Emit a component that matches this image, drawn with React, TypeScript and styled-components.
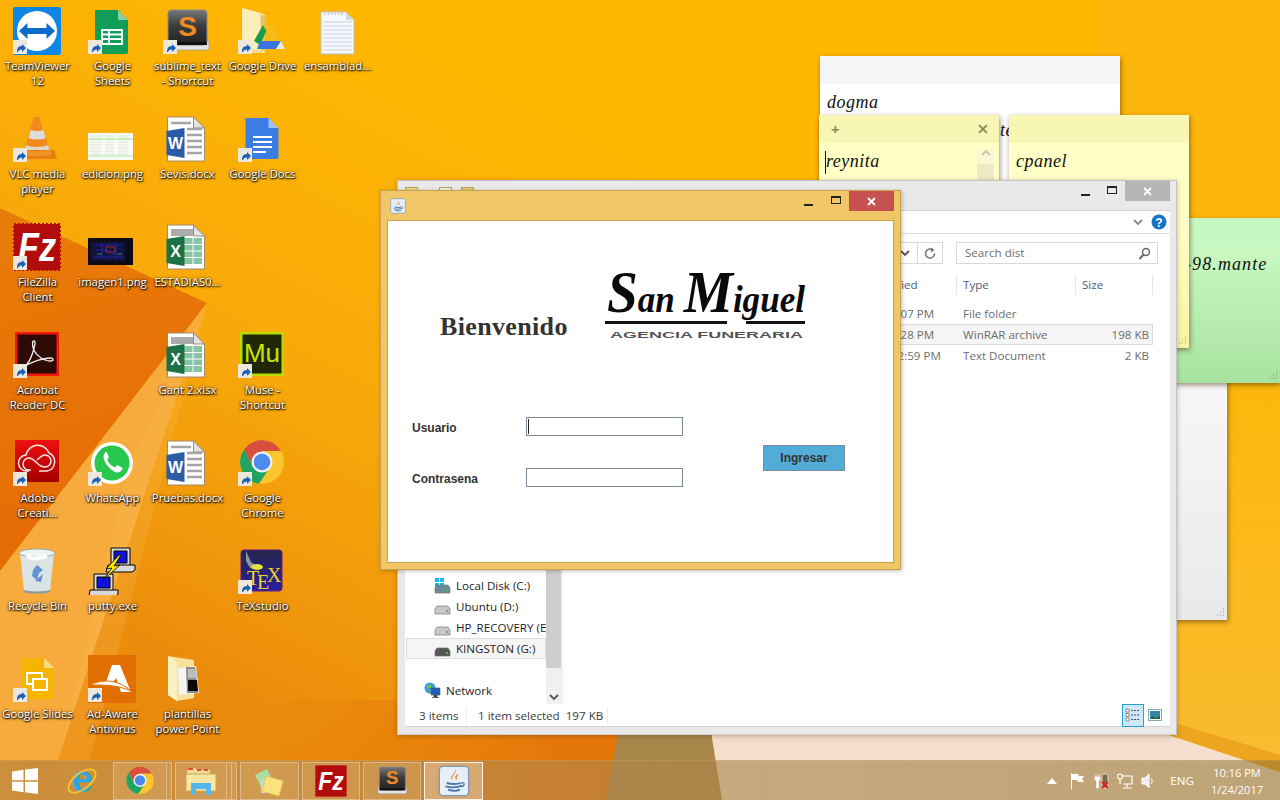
import React from 'react';
import styled, { createGlobalStyle } from 'styled-components';

const Global = createGlobalStyle`
  html, body { margin: 0; padding: 0; width: 1280px; height: 800px; overflow: hidden; }
  body { font-family: "Open Sans", "Noto Sans", sans-serif; }
  * { box-sizing: border-box; }
`;

const UI = '"Open Sans", "Noto Sans", sans-serif';
const HAND = '"Liberation Serif", serif';

const Desktop = styled.div`
  position: relative; width: 1280px; height: 800px; overflow: hidden; background: #fdb400;
`;
const WallpaperSvg = styled.svg`
  position: absolute; inset: 0; width: 1280px; height: 800px;
`;
const IconGrid = styled.div`
  position: absolute; inset: 0 auto auto 0;
  display: grid; grid-template-columns: repeat(5, 75px); grid-auto-rows: 108px;
`;
const Cell = styled.div<{ $c: number; $r: number }>`
  grid-column: ${p => p.$c + 1}; grid-row: ${p => p.$r + 1};
  display: flex; flex-direction: column; align-items: center; padding-top: 7px;
`;
const IconBox = styled.div`
  position: relative; width: 48px; height: 48px; flex: none; margin-right: 1px;
  svg { display: block; }
`;
const Badge = styled.svg`
  position: absolute; left: 0; bottom: 1px; width: 14px; height: 14px;
`;
const Label = styled.div`
  margin-top: 3px; width: 74px; text-align: center; white-space: pre; color: #fff;
  font: 400 11.3px/15px ${UI};
  text-shadow: 0 1px 2px rgba(0,0,0,.95), 0 0 3px rgba(0,0,0,.7), 1px 1px 1px rgba(0,0,0,.6);
`;

const Note = styled.div<{ $x: number; $y: number; $w: number; $h: number; $body: string }>`
  position: absolute; left: ${p => p.$x}px; top: ${p => p.$y}px; width: ${p => p.$w}px; height: ${p => p.$h}px;
  background: ${p => p.$body}; box-shadow: 1px 2px 5px rgba(60,30,0,.5);
  display: flex; flex-direction: column; overflow: hidden;
`;
const NoteHead = styled.div<{ $c: string }>`
  height: 28px; flex: none; background: ${p => p.$c}; display: flex; align-items: center;
  justify-content: space-between; padding: 0 11px 0 12px; color: #8b8a5c; font: 700 15px/1 ${UI};
`;
const NoteBody = styled.div<{ $pl?: number }>`
  flex: 1; display: flex; min-height: 0; padding: 4px 0 0 ${p => p.$pl ?? 7}px; position: relative;
`;
const NoteText = styled.div<{ $ls?: number }>`
  flex: 1; font: italic 400 18px/28px ${HAND}; letter-spacing: ${p => p.$ls ?? 0.5}px; color: #111; white-space: pre;
`;
const NoteIndent = styled.div<{ $w: number }>`
  padding-left: ${p => p.$w}px;
`;
const Caret = styled.i`
  position: absolute; left: 6px; top: 8px; width: 1px; height: 23px; background: #111;
`;
const Grip = styled.svg`
  position: absolute; right: 2px; bottom: 2px; width: 10px; height: 10px;
`;
const NoteScroll = styled.div`
  position: absolute; right: 5px; top: 6px; width: 17px; height: 120px; background: #f8f7d3;
  display: flex; flex-direction: column; align-items: center;
`;
const NoteThumb = styled.div`
  margin-top: 8px; width: 17px; flex: 1; background: #edebc6;
`;

const Explorer = styled.div`
  position: absolute; left: 397px; top: 180px; width: 780px; height: 555px;
  background: #e9e9e9; border: 1px solid #c4c4c4; border-bottom-color: #d0d0d0;
  box-shadow: 0 1px 5px rgba(60,30,0,.3);
  display: flex; flex-direction: column; padding: 0 6px 7px 7px;
`;
const ExTitle = styled.div`
  height: 29px; flex: none; display: flex; align-items: flex-start; position: relative;
`;
const QuickIcons = styled.div`
  display: flex; gap: 9px; align-items: center; padding-top: 6px;
  svg:first-child { margin-right: 12px; }
`;
const WinButtons = styled.div`
  margin-left: auto; display: flex; align-items: flex-start;
`;
const WinBtn = styled.div<{ $w: number; $bg?: string }>`
  width: ${p => p.$w}px; height: 20px; background: ${p => p.$bg || 'transparent'};
  display: flex; align-items: center; justify-content: center;
`;
const MinGlyph = styled.i`
  display: block; width: 9px; height: 2px; background: #222; margin-top: 8px;
`;
const MaxGlyph = styled.i`
  display: block; width: 10px; height: 8px; border: 1px solid #222; border-top-width: 2px; margin-top: -2px;
`;
const ExInner = styled.div`
  flex: 1; background: #fff; display: flex; flex-direction: column; min-height: 0;
  border: 1px solid #d4d4d4; border-width: 1px 0 1px 0;
`;
const Ribbon = styled.div`
  height: 23px; flex: none; border-bottom: 1px solid #dcdcdc; display: flex; align-items: center;
  justify-content: flex-end; padding-right: 3px; gap: 8px;
`;
const AddressRow = styled.div`
  height: 30px; flex: none; display: flex; align-items: flex-end; padding: 0 12px 0 45px; gap: 13px;
`;
const AddressBox = styled.div`
  flex: 1; height: 22px; border: 1px solid #d9d9d9; display: flex; justify-content: flex-end; align-items: center;
`;
const AddrPart = styled.div`
  width: 25px; height: 20px; display: flex; align-items: center; justify-content: center;
  & + & { border-left: 1px solid #d9d9d9; }
`;
const SearchBox = styled.div`
  width: 202px; height: 22px; border: 1px solid #d9d9d9; display: flex; align-items: center;
  justify-content: space-between; padding: 0 6px 0 8px; color: #6d6d6d; font: 400 11.6px/1 ${UI};
`;
const ExBody = styled.div`
  flex: 1; display: flex; min-height: 0;
`;
const NavPane = styled.div`
  width: 158px; flex: none; position: relative; display: flex; flex-direction: column;
  justify-content: flex-end; border-right: 2px solid #f1f1f1; padding-bottom: 3px;
`;
const NavItem = styled.div<{ $sel?: boolean }>`
  height: 21px; width: 140px; display: flex; align-items: center; gap: 5px; padding-left: 28px;
  margin-left: 1px; color: #1d1d1d; font: 400 11.6px/1 ${UI}; white-space: nowrap; overflow: hidden;
  background: ${p => (p.$sel ? '#f5f5f5' : 'transparent')};
  outline: ${p => (p.$sel ? '1px solid #dcdcdc' : 'none')}; outline-offset: -1px;
  svg { flex: none; }
`;
const NavNet = styled(NavItem)`
  margin-top: 21px; padding-left: 18px;
`;
const NavScroll = styled.div`
  position: absolute; right: 0; top: 0; bottom: 0; width: 15px; background: #f0f0f0;
  display: flex; flex-direction: column; align-items: center; justify-content: flex-end; padding-bottom: 3px;
`;
const NavThumb = styled.div`
  position: absolute; left: 0; right: 0; top: 0; bottom: 36px; background: #cdcdcd;
`;
const List = styled.div`
  flex: 1; display: flex; flex-direction: column; padding-top: 10px; min-width: 0;
`;
const GridRow = styled.div<{ $sel?: boolean; $head?: boolean }>`
  display: grid; grid-template-columns: 272px 122px 119px 77px; align-items: center;
  height: 21px; width: 590px; color: ${p => (p.$head ? '#4c607a' : '#6d6d6d')}; font: 400 11.6px/1 ${UI};
  background: ${p => (p.$sel ? '#f5f5f5' : 'transparent')};
  outline: ${p => (p.$sel ? '1px solid #dadada' : 'none')}; outline-offset: -1px;
`;
const HeadCell = styled.div`
  height: 20px; display: flex; align-items: center; padding-left: 6px; border-right: 1px solid #dbe7f3;
  white-space: nowrap; overflow: hidden;
`;
const ListRows = styled.div`
  margin-top: 8px; display: flex; flex-direction: column;
`;
const TextCell = styled.div<{ $r?: boolean }>`
  padding: ${p => (p.$r ? '0 4px 0 0' : '0 0 0 6px')}; text-align: ${p => (p.$r ? 'right' : 'left')}; white-space: nowrap;
`;
const DateCell = styled.div`
  margin-left: -2px; white-space: nowrap;
`;
const Status = styled.div`
  height: 22px; flex: none; display: flex; align-items: center; color: #3c3c3c; font: 400 11.6px/1 ${UI};
  padding: 2px 0 0 14px; position: relative; white-space: pre;
`;
const StatusPart = styled.div<{ $w: number }>`
  width: ${p => p.$w}px; height: 16px; display: flex; align-items: center; border-right: 1px solid #ececec;
  & + & { padding-left: 11px; }
`;
const ViewButtons = styled.div`
  margin-left: auto; display: flex; align-items: center; gap: 4px; padding-right: 8px; margin-top: -2px;
`;
const ViewBtn = styled.div<{ $on?: boolean }>`
  width: ${p => (p.$on ? 22 : 14)}px; height: 23px; display: flex; align-items: center; justify-content: center;
  background: ${p => (p.$on ? '#cde8f8' : 'transparent')}; border: ${p => (p.$on ? '1px solid #26a0da' : 'none')};
`;

const Dialog = styled.div`
  position: absolute; left: 380px; top: 190px; width: 521px; height: 380px; background: #f0c667;
  border: 1px solid #c8a24d; box-shadow: 1px 1px 4px rgba(60,30,0,.3);
  display: flex; flex-direction: column; padding: 0 6px 6px 6px;
`;
const DlgTitle = styled.div`
  height: 29px; flex: none; display: flex; align-items: flex-start; padding-left: 3px;
`;
const DlgJava = styled.div`
  margin-top: 6px;
`;
const Client = styled.div`
  flex: 1; background: #fff; border: 1px solid #c8a24d; padding: 50px 0 0 0;
`;
const HeaderRow = styled.div`
  display: flex; align-items: flex-start; padding-left: 52px;
`;
const Welcome = styled.div`
  width: 165px; margin-top: 42px; font: 700 26px/28px "Liberation Serif", serif; letter-spacing: .35px; color: #333;
`;
const LogoSvg = styled.svg`
  display: block; width: 202px; height: 70px; flex: none;
`;
const Form = styled.div`
  margin-top: 76px; padding-left: 24px;
  display: grid; grid-template-columns: 114px 157px 82px; grid-template-rows: 19px 19px; row-gap: 32px; column-gap: 0;
`;
const FieldLabel = styled.div`
  font: 700 12px/23px "Liberation Sans", Arial, sans-serif; color: #333;
`;
const Field = styled.div`
  position: relative; border: 1px solid #7a8a99; background: #fff;
`;
const FieldCaret = styled.i`
  position: absolute; left: 1px; top: 1px; bottom: 1px; width: 1px; background: #222;
`;
const Submit = styled.div`
  grid-column: 3; grid-row: 1 / span 2; margin: 28px 0 0 80px; width: 82px; height: 26px;
  background: #51add8; border: 1px solid #7a8a99; display: flex; align-items: center; justify-content: center;
  font: 700 12px/1 "Liberation Sans", Arial, sans-serif; color: #333;
`;

const Taskbar = styled.div`
  position: absolute; left: 0; right: 0; bottom: 0; height: 40px; display: flex; align-items: stretch;
  background: linear-gradient(90deg, rgba(186,146,88,.62), rgba(176,134,76,.6) 45%, rgba(145,115,50,.55));
  border-top: 1px solid rgba(255,255,255,.08); padding-top: 1px; padding-right: 17px;
`;
const Start = styled.div`
  width: 50px; flex: none; display: flex; align-items: center; justify-content: center;
`;
const Pinned = styled.div`
  width: 63px; flex: none; display: flex; align-items: center; justify-content: center;
`;
const TaskBtn = styled.div<{ $w?: number; $on?: boolean; $ml?: number }>`
  width: ${p => p.$w ?? 59}px; flex: none; margin-left: ${p => p.$ml ?? 3}px; display: flex; align-items: center; justify-content: center;
  border: 1px solid ${p => (p.$on ? 'rgba(255,255,255,.85)' : 'rgba(255,255,255,.32)')};
  background: ${p => (p.$on ? 'rgba(255,255,255,.3)' : 'rgba(255,255,255,.12)')};
`;
const Sliver = styled.div`
  width: 5px; flex: none; border: 1px solid rgba(255,255,255,.32); border-left: 0; background: rgba(255,255,255,.12);
`;
const Tray = styled.div`
  margin-left: auto; display: flex; align-items: center; color: #fff;
`;
const TrayIcons = styled.div`
  display: flex; align-items: center; gap: 8px; margin-right: 15px;
`;
const FlagOffset = styled.span`
  display: block; margin-left: 4px; line-height: 0;
`;
const Eng = styled.div`
  font: 400 11.6px/1 ${UI}; margin-right: 17px;
`;
const Clock = styled.div`
  display: flex; flex-direction: column; align-items: center; font: 400 11px/17px ${UI};
`;

/* ---------- icons ---------- */
const Cut = () => (
  <Badge viewBox="0 0 14 14">
    <rect width="14" height="14" fill="#eee8dc" />
    <path d="M4 12c0-4 1.500-6 5-6V4l4 4-4 4V9.500C6.500 9.500 5.500 10.500 5 12z" fill="#1a63b8" />
  </Badge>
);
const S48 = (p: React.SVGProps<SVGSVGElement> & { s?: number }) => {
  const { s = 48, ...r } = p;
  return <svg width={s} height={s} viewBox="0 0 48 48" {...r} />;
};
const Team = () => (
  <S48>
    <rect width="48" height="48" rx="2" fill="#0e86e8" />
    <circle cx="24" cy="24" r="20" fill="#fff" />
    <path d="M6 24l8.500-8v5h19v-5l8.500 8-8.500 8v-5h-19v5z" fill="#0e6ccb" />
  </S48>
);
const Sheets = () => (
  <S48>
    <path d="M7 3h23l10 10v32a2 2 0 0 1-2 2H9a2 2 0 0 1-2-2z" fill="#0f9d58" />
    <path d="M30 3l10 10H30z" fill="#87ceac" />
    <path d="M14 23h20v14H14zM14 27.500h20M14 32h20M21 23v14" fill="none" stroke="#fff" strokeWidth="1.800" />
  </S48>
);
const Sublime = ({ s = 48, id = 'subg' }: { s?: number; id?: string }) => (
  <S48 s={s}>
    <defs><linearGradient id={id} x1="0" y1="0" x2="0" y2="1"><stop offset="0" stopColor="#777" /><stop offset=".45" stopColor="#3c3c3c" /><stop offset="1" stopColor="#222" /></linearGradient></defs>
    <rect x="3" y="33" width="43" height="10" rx="2.500" fill="#e4e4e4" stroke="#999" strokeWidth=".7" />
    <rect x="5" y="3" width="39" height="35" rx="3.500" fill={`url(#${id})`} stroke="#8a8a8a" />
    <rect x="5" y="35" width="39" height="3" fill="#111" />
    <text x="24.500" y="29" textAnchor="middle" fontFamily="Liberation Sans" fontWeight="700" fontSize="28" fill="#f08a24">S</text>
  </S48>
);
const Drive = () => (
  <S48>
    <path d="M4 1l19 5 4 2v38H14L4 40z" fill="#f4dd90" />
    <path d="M4 1l18 5v38L4 40z" fill="#fbeeb8" />
    <path d="M23 8l4 1v34h-4z" fill="#e3c667" />
    <path d="M16 34l9-16h6l-9 20z" fill="#1a9d4a" />
    <path d="M25 18h9l9 16h-9z" fill="#f5bd1a" />
    <path d="M19 42l3-8h21l-5 8z" fill="#3a76e0" />
    <path d="M38 42h9l-4-8z" fill="#e9e9e9" />
  </S48>
);
const TextDoc = () => (
  <S48>
    <path d="M8 5h25l8 8v34H8z" fill="#f6f8fc" stroke="#bbc0c8" />
    <path d="M33 5v8h8z" fill="#d4d8de" />
    {[15, 19, 23, 27, 31, 35, 39, 43].map(y => <path key={y} d={`M10 ${y}h29`} stroke="#c6d1e2" strokeWidth="1" />)}
    <path d="M11 7h20" stroke="#999" strokeDasharray="1.500 2" />
  </S48>
);
const Vlc = () => (
  <S48>
    <path d="M21 2h5l11 34H11z" fill="#f08a1c" />
    <path d="M17.500 15c4 1.500 9 1.500 13 0l2 8c-5 2-12 2-17 0z" fill="#ddd" />
    <path d="M13 30c6 2.500 16 2.500 22 0l1.500 4.500c-6 3-18 3-24.500 0z" fill="#ddd" opacity=".9" />
    <path d="M7 35h34l3 9H4z" fill="#e87c10" />
    <path d="M12 34c6 3 18 3 25 0l2 5c-7 3-22 3-29 0z" fill="#ef9324" />
  </S48>
);
const PngLight = () => (
  <S48>
    <rect x="0" y="18" width="45" height="27" fill="#f8faf4" />
    {[21, 24, 27, 30, 33, 36, 39].map(y => <path key={y} d={`M2 ${y}h12M17 ${y}h9M30 ${y}h10`} stroke="#d4d8cf" strokeWidth=".7" />)}
    <path d="M0 24h45M0 41h45" stroke="#a4e690" strokeWidth="1.200" />
  </S48>
);
const PngDark = () => (
  <S48>
    <rect x="0" y="15" width="45" height="27" fill="#0b0c14" />
    <path d="M3 19h34v19H3z" fill="#13133d" />
    <path d="M8 22h26M8 27h12l3 4h10M6 34h30M14 20v16M28 20v16" stroke="#2323a8" strokeWidth="1" fill="none" />
    <rect x="18" y="24" width="9" height="5" fill="none" stroke="#a33" strokeWidth=".8" />
    <path d="M30 31h4M9 31h5" stroke="#3a8c3a" strokeWidth="1" />
  </S48>
);
const OfficeDoc = ({ letter, tile, excel }: { letter: string; tile: string; excel?: boolean }) => (
  <S48>
    <path d="M4.500 2h26l11 11v33h-37z" fill="#fff" stroke="#a08c6c" />
    <path d="M30.500 2v11h11z" fill="#e4e4e4" stroke="#a08c6c" />
    {excel ? (
      <>
        <path d="M8 6h22v7H8z" fill="#ababab" />
        <path d="M21 15h18v26H21z" fill="#86c5a3" />
        <path d="M21 21.500h18M21 28h18M21 34.500h18M30 15v26" stroke="#fff" />
      </>
    ) : (
      <path d="M8 8h20M24 14h15M24 20h15M24 26h15M24 32h15M24 38h15" stroke="#a5a5a5" strokeWidth="2.500" />
    )}
    <path d="M3.500 16l18-3v30l-18-3z" fill={tile} />
    <text x="12.500" y="34" textAnchor="middle" fontFamily="Liberation Sans" fontWeight="700" fontSize="16" fill="#fff">{letter}</text>
  </S48>
);
const Docs = () => (
  <S48>
    <path d="M7.500 3h23l10 10v29a2 2 0 0 1-2 2h-29a2 2 0 0 1-2-2z" fill="#3b7de2" />
    <path d="M30.500 3l10 10h-10z" fill="#a3c2f3" />
    <path d="M15 22h19M15 27h19M15 32h19M15 37h13" stroke="#fff" strokeWidth="1.800" />
  </S48>
);
const FileZ = ({ s = 48 }: { s?: number }) => (
  <S48 s={s}>
    <rect x="1" y="1" width="46" height="46" fill="#b30c0c" stroke="#b30c0c" strokeWidth="2" strokeDasharray="2 2" />
    <text x="24" y="38" textAnchor="middle" textLength="38" lengthAdjust="spacingAndGlyphs" fontFamily="Liberation Sans" fontStyle="italic" fontWeight="700" fontSize="40" fill="#fff">Fz</text>
  </S48>
);
const Acrobat = () => (
  <S48>
    <rect x="2" y="1" width="44" height="44" fill="#f31a0c" />
    <rect x="4.500" y="3.500" width="39" height="39" fill="#2e0a04" />
    <path d="M10 37c6-4 10-14 12-24 .5-4-2.500-4-2.500 0 0 9 10 17 18 17 4 0 3-3 0-3-7 0-20 4-27 9" fill="none" stroke="#eee" strokeWidth="1.300" />
  </S48>
);
const Muse = () => (
  <S48>
    <rect x="2" y="1" width="44" height="44" fill="#b9dd00" />
    <rect x="4.500" y="3.500" width="39" height="39" fill="#1f2707" />
    <text x="24" y="31" textAnchor="middle" fontFamily="Liberation Sans" fontSize="26" fill="#c3e600">Mu</text>
  </S48>
);
const Cc = () => (
  <S48>
    <defs><linearGradient id="ccg" x1="0" y1="0" x2="0" y2="1"><stop offset="0" stopColor="#f01010" /><stop offset="1" stopColor="#a30000" /></linearGradient></defs>
    <rect x="2" y="1" width="44" height="42" fill="url(#ccg)" />
    <path d="M16 32h-2a8 8 0 0 1-1-16 12 12 0 0 1 23-2 9.500 9.500 0 0 1-2 18h-8" fill="none" stroke="#fff" strokeWidth="1.500" opacity=".9" />
    <path d="M24 24c-3-3-5-5-8-5a6 6 0 0 0 0 12h2M24 24c3 3 5 4 8 4a6 6 0 0 0 0-12c-3 0-5 2-8 5" fill="none" stroke="#fff" strokeWidth="1.500" opacity=".9" />
  </S48>
);
const Whats = () => (
  <S48>
    <circle cx="24" cy="24" r="21" fill="#fff" />
    <circle cx="24" cy="24" r="17.500" fill="#28c84c" />
    <path d="M5 44l3-11 8 8z" fill="#fff" />
    <path d="M17 14c-2 2-2 5 0 9s6 8 10 10c3 1 5 0 7-2 .7-1 .5-2 0-2.500l-4-2c-.8-.4-1.300 0-2 1-.5.700-1 .8-2 .4-3-1.400-5-3.500-6.500-6.400-.4-.8 0-1.300.7-2 .6-.7.800-1.200.4-2l-1.600-3.800c-.4-.8-1.700-.7-2-.2z" fill="#fff" />
  </S48>
);
const Chrome = ({ s = 48 }: { s?: number }) => (
  <S48 s={s}>
    <circle cx="24" cy="23" r="22" fill="#fbc52d" />
    <path d="M43 12A22 22 0 0 0 6 10.500L14.500 27 24 12z" fill="#d94f3f" />
    <path d="M6 10.500A22 22 0 0 0 21 44.800L29.500 32 14.500 27z" fill="#1fa463" />
    <circle cx="24" cy="23" r="10.500" fill="#f2f2f2" />
    <circle cx="24" cy="23" r="8.300" fill="#4b8bf0" />
  </S48>
);
const Recycle = () => (
  <S48>
    <path d="M7 6h34l-4 38c-6 2-20 2-26 0z" fill="#d9e8f2" opacity=".92" />
    <ellipse cx="24" cy="6" rx="18" ry="4" fill="#eef3f6" stroke="#9aa" />
    <path d="M14 8c4 6 14 3 20 1" stroke="#fff" strokeWidth="4" fill="none" />
    <path d="M24 18l6 5-4 3-2 7-5-4 1-6zM30 27l-2 8-6-1" fill="#5f93d6" />
    <path d="M11 44c6 2 20 2 26 0" stroke="#8a9aa4" strokeWidth="2" fill="none" />
  </S48>
);
const Putty = () => (
  <S48>
    <path d="M23 1h19v18H23z" fill="#d9d9d9" stroke="#000" />
    <path d="M26 4h13v12H26z" fill="#1212e0" stroke="#000" />
    <path d="M20 18h27v5l-3 2H18z" fill="#d9d9d9" stroke="#000" />
    <path d="M6 27h19v17H6z" fill="#d9d9d9" stroke="#000" />
    <path d="M9 30h13v11H9z" fill="#1212e0" stroke="#000" />
    <path d="M2 43h28v4l-2 2H1z" fill="#d9d9d9" stroke="#000" />
    <path d="M31 8L18 22l6-1-9 12 17-15-6 1 7-11z" fill="#ffec00" stroke="#000" strokeWidth=".8" />
  </S48>
);
const Tex = () => (
  <S48>
    <defs><linearGradient id="txg" x1="0" y1="0" x2="0" y2="1"><stop offset="0" stopColor="#26264a" /><stop offset="1" stopColor="#2a1f9c" /></linearGradient></defs>
    <rect x="3" y="3" width="41" height="41" rx="3" fill="url(#txg)" stroke="#5c1e8c" />
    <path d="M8 4l5 11 7 5-8 1-4-7z" fill="#8a94a0" />
    <ellipse cx="19" cy="20" rx="6" ry="3" fill="#e5e23c" />
    <text x="9" y="38" fontFamily="Liberation Serif" fontSize="20" fill="#f1d22c">T</text>
    <text x="19" y="42" fontFamily="Liberation Serif" fontSize="20" fill="#f1d22c">E</text>
    <text x="29" y="35" fontFamily="Liberation Serif" fontSize="20" fill="#f1d22c">X</text>
  </S48>
);
const Slides = () => (
  <S48>
    <path d="M8 3h23l10 10v29a2 2 0 0 1-2 2H10a2 2 0 0 1-2-2z" fill="#f5b400" />
    <path d="M31 3l10 10H31z" fill="#fadc80" />
    <path d="M14 18h15v11H14z" fill="none" stroke="#fff" strokeWidth="2" />
    <path d="M20 24h14v11H20z" fill="#f5b400" stroke="#fff" strokeWidth="2" />
  </S48>
);
const AdAware = () => (
  <S48>
    <rect width="48" height="48" fill="#e06e00" />
    <path d="M24 10h8l11 27H33l-5-14-5 7h-6z" fill="#fff" />
    <path d="M2 30c12-6 28-6 41 6-13-6-26-6-41-6z" fill="#fff" stroke="#e06e00" strokeWidth="1" />
  </S48>
);
const FilmFolder = () => (
  <S48>
    <path d="M5 1l26 4v38l-17 3-9-6z" fill="#f6e29a" />
    <path d="M5 1l9 6v39l-9-6z" fill="#fbf0c2" />
    <path d="M15 13l18-2 3 27-20 2z" fill="#f4f4f4" />
    <path d="M23 12h9l3 26H24z" fill="#8b8b8b" />
    <path d="M25 25h9l1 11H25z" fill="#0a0a0a" />
    <path d="M25 14h8l1 9h-9z" fill="#bdbdbd" />
  </S48>
);
const JavaIcon = ({ s = 48 }: { s?: number }) => (
  <S48 s={s}>
    <rect x="2" y="2" width="44" height="44" rx="6" fill="#e6eef6" stroke="#7c99b8" strokeWidth="2" />
    <path d="M26 6c4 6-8 10-4 17-7-6 6-10 4-17zM31 13c-6 3-6 6-3 10-1-5 1-7 3-10z" fill="#e76f00" />
    <path d="M13 27c6 2 16 2 21 0M11 32c8 2 18 2 25-1M15 37c6 2 14 2 18 0" stroke="#4a76a8" strokeWidth="2.800" fill="none" />
    <path d="M34 27c5-2 8 3 1 6" stroke="#4a76a8" strokeWidth="2" fill="none" />
  </S48>
);
const Ie = () => (
  <svg width="32" height="32" viewBox="0 0 32 32">
    <text x="16" y="27" textAnchor="middle" fontFamily="Liberation Sans" fontWeight="700" fontSize="38" fill="#2ba6e6">e</text>
    <ellipse cx="16" cy="16" rx="16" ry="8" transform="rotate(-38 16 16)" fill="none" stroke="#f4c430" strokeWidth="1.800" />
  </svg>
);
const ExplorerIcon = () => (
  <svg width="32" height="32" viewBox="0 0 32 32">
    <path d="M2 6l2-3h6l2 2h13v4H2z" fill="#f0dc8a" />
    <path d="M3 3h5v2H3zM12 4h4v2h-4zM19 4h4v2h-4z" fill="#e04b3a" />
    <path d="M1 9h30v17H1z" fill="#f7e7a2" stroke="#c9ab5d" />
    <path d="M6 18h20v12h-5v-6H11v6H6z" fill="#56b6e9" />
  </svg>
);
const Sticky = () => (
  <svg width="34" height="32" viewBox="0 0 34 32">
    <path d="M2 10l12-6 6 12-12 6z" fill="#a8dea0" />
    <path d="M8 14h13v14H8z" fill="#bcd9f0" />
    <path d="M13 11l17 5-4 15-17-5z" fill="#fbe27c" stroke="#e6c75a" />
  </svg>
);
const TinyFolder = ({ tint = '#ecdc8f' }: { tint?: string }) => (
  <svg width="13" height="5" viewBox="0 0 13 5"><rect x=".5" y=".5" width="12" height="6" fill={tint} stroke="#b9a154" /></svg>
);
const Hdd = ({ kind = 'plain' }: { kind?: string }) => (
  <svg width="17" height="16" viewBox="0 0 17 16">
    {kind === 'win' && <path d="M1 0h4v4H1zM6 0h4v4H6zM1 5h4v4H1zM6 5h4v4H6z" fill="#18b8e8" />}
    <path d="M1 10l2-3h11l2 3v5H1z" fill={kind === 'dark' ? '#555' : kind === 'win' ? '#6b8a99' : '#c8c8c8'} stroke="#777" strokeWidth=".7" />
    <rect x="12" y="11" width="2" height="2" fill="#58b848" />
  </svg>
);
const NetIcon = () => (
  <svg width="17" height="17" viewBox="0 0 17 17">
    <circle cx="6" cy="6" r="5.500" fill="#37a0dc" />
    <path d="M3 3h4v3H3zM6 7h3v3H6z" fill="#6cc24a" />
    <path d="M7 6h9v7H7z" fill="#1f5fc0" stroke="#555" strokeWidth=".6" />
    <path d="M10 13h3v2h-3zM8 15.500h7" stroke="#666" />
  </svg>
);
const Chev = ({ c = '#666', up, w = 10 }: { c?: string; up?: boolean; w?: number }) => (
  <svg width={w} height={w * .7} viewBox="0 0 10 7">
    <path d={up ? 'M1 6l4-4 4 4' : 'M1 1l4 4 4-4'} fill="none" stroke={c} strokeWidth="1.800" />
  </svg>
);
const GripDots = ({ c }: { c: string }) => (
  <Grip viewBox="0 0 10 10"><path d="M8 1h1M5 4h1M8 4h1M2 7h1M5 7h1M8 7h1" stroke={c} strokeWidth="1.200" strokeDasharray="1 1" /></Grip>
);
const CloseX = ({ s = 9, c = '#fff' }: { s?: number; c?: string }) => (
  <svg width={s} height={s} viewBox="0 0 9 9"><path d="M1 1l7 7M8 1L1 8" stroke={c} strokeWidth="1.800" /></svg>
);

const ICONS: { c: number; r: number; label: string; I: React.ReactNode; cut?: boolean }[] = [
  { c: 0, r: 0, label: 'TeamViewer\n12', I: <Team />, cut: true },
  { c: 1, r: 0, label: 'Google\nSheets', I: <Sheets />, cut: true },
  { c: 2, r: 0, label: 'sublime_text\n- Shortcut', I: <Sublime />, cut: true },
  { c: 3, r: 0, label: 'Google Drive', I: <Drive />, cut: true },
  { c: 4, r: 0, label: 'ensamblad...', I: <TextDoc /> },
  { c: 0, r: 1, label: 'VLC media\nplayer', I: <Vlc />, cut: true },
  { c: 1, r: 1, label: 'edicion.png', I: <PngLight /> },
  { c: 2, r: 1, label: 'Sevis.docx', I: <OfficeDoc letter="W" tile="#2b5aa6" /> },
  { c: 3, r: 1, label: 'Google Docs', I: <Docs />, cut: true },
  { c: 0, r: 2, label: 'FileZilla\nClient', I: <FileZ />, cut: true },
  { c: 1, r: 2, label: 'imagen1.png', I: <PngDark /> },
  { c: 2, r: 2, label: 'ESTADIAS0...', I: <OfficeDoc letter="X" tile="#1e7145" excel /> },
  { c: 0, r: 3, label: 'Acrobat\nReader DC', I: <Acrobat />, cut: true },
  { c: 2, r: 3, label: 'Gant 2.xlsx', I: <OfficeDoc letter="X" tile="#1e7145" excel /> },
  { c: 3, r: 3, label: 'Muse -\nShortcut', I: <Muse />, cut: true },
  { c: 0, r: 4, label: 'Adobe\nCreati...', I: <Cc />, cut: true },
  { c: 1, r: 4, label: 'WhatsApp', I: <Whats />, cut: true },
  { c: 2, r: 4, label: 'Pruebas.docx', I: <OfficeDoc letter="W" tile="#2b5aa6" /> },
  { c: 3, r: 4, label: 'Google\nChrome', I: <Chrome />, cut: true },
  { c: 0, r: 5, label: 'Recycle Bin', I: <Recycle /> },
  { c: 1, r: 5, label: 'putty.exe', I: <Putty /> },
  { c: 3, r: 5, label: 'TeXstudio', I: <Tex />, cut: true },
  { c: 0, r: 6, label: 'Google Slides', I: <Slides />, cut: true },
  { c: 1, r: 6, label: 'Ad-Aware\nAntivirus', I: <AdAware />, cut: true },
  { c: 2, r: 6, label: 'plantillas\npower Point', I: <FilmFolder /> },
];

const Wallpaper = () => (
  <WallpaperSvg viewBox="0 0 1280 800">
    <defs>
      <linearGradient id="wbase" gradientUnits="userSpaceOnUse" x1="620" y1="150" x2="300" y2="760">
        <stop offset="0" stopColor="#ffb800" />
        <stop offset=".5" stopColor="#f8a90a" />
        <stop offset="1" stopColor="#ea8a0c" />
      </linearGradient>
      <linearGradient id="wrig" gradientUnits="userSpaceOnUse" x1="1250" y1="380" x2="1250" y2="760">
        <stop offset="0" stopColor="#fdb70a" />
        <stop offset="1" stopColor="#f8bc30" />
      </linearGradient>
      <linearGradient id="work" gradientUnits="userSpaceOnUse" x1="0" y1="210" x2="120" y2="570">
        <stop offset="0" stopColor="#e87c08" />
        <stop offset="1" stopColor="#e66a06" />
      </linearGradient>
      <linearGradient id="wlow" gradientUnits="userSpaceOnUse" x1="250" y1="0" x2="560" y2="0">
        <stop offset="0" stopColor="#e5770a" stopOpacity="0" />
        <stop offset="1" stopColor="#e5770a" />
      </linearGradient>
    </defs>
    <rect width="1280" height="800" fill="url(#wbase)" />
    <rect x="1100" y="0" width="180" height="800" fill="url(#wrig)" />
    <polygon points="0,208 207,303 0,571" fill="url(#work)" />
    <polygon points="207,303 0,571 0,760 58,760" fill="#f7ab3c" />
    <polygon points="207,303 128,470 58,760 90,760" fill="#fabc52" opacity=".25" />
    <rect x="250" y="700" width="376" height="100" fill="url(#wlow)" />
    <polygon points="624,700 706,700 722,800 606,800" fill="#a8874a" />
    <polygon points="706,700 1100,700 1163,733 1280,772 1280,800 722,800" fill="#f3dfcc" />
    <polygon points="1140,722 1163,733 1280,772 1280,755 1172,722" fill="#eda41e" />
  </WallpaperSvg>
);

const Logo = () => (
  <LogoSvg viewBox="0 0 202 70">
    <text x="2" y="41" textLength="198" lengthAdjust="spacingAndGlyphs" fontFamily="Liberation Serif" fontStyle="italic" fontWeight="700" fill="#0a0a0a">
      <tspan fontSize="60">S</tspan>
      <tspan fontSize="38">an </tspan>
      <tspan fontSize="60">M</tspan>
      <tspan fontSize="38">iguel</tspan>
    </text>
    <path d="M0 51.500h122M141 51.500h59" stroke="#111" strokeWidth="3" />
    <text x="5" y="67" textLength="193" lengthAdjust="spacingAndGlyphs" fontFamily="Liberation Sans" fontWeight="700" fontSize="9.500" fill="#555">AGENCIA FUNERARIA</text>
  </LogoSvg>
);

const HELP = (
  <svg width="16" height="16" viewBox="0 0 16 16">
    <circle cx="8" cy="8" r="7.500" fill="#1574c8" />
    <text x="8" y="12.500" textAnchor="middle" fontFamily="Liberation Sans" fontWeight="700" fontSize="12" fill="#fff">?</text>
  </svg>
);

export default function App() {
  return (
    <Desktop>
      <Global />
      <Wallpaper />
      <IconGrid>
        {ICONS.map(i => (
          <Cell key={i.label} $c={i.c} $r={i.r}>
            <IconBox>{i.I}{i.cut && <Cut />}</IconBox>
            <Label>{i.label}</Label>
          </Cell>
        ))}
      </IconGrid>

      <Note $x={820} $y={56} $w={300} $h={240} $body="#fff">
        <NoteHead $c="#f5f5f5" />
        <NoteBody>
          <NoteText>dogma<NoteIndent $w={173}>te</NoteIndent></NoteText>
        </NoteBody>
      </Note>
      <Note $x={927} $y={320} $w={300} $h={300} $body="linear-gradient(#fbfbfb,#e9e9e9)">
        <NoteHead $c="#f2f2f2" />
        <GripDots c="#9a9a9a" />
      </Note>
      <Note $x={1100} $y={218} $w={180} $h={165} $body="linear-gradient(#d0fdc8,#a8e2a0)">
        <NoteHead $c="#c6f7c0" />
        <NoteBody $pl={85}><NoteText $ls={1.1}>-98.mante</NoteText></NoteBody>
        <GripDots c="#7a9a72" />
      </Note>
      <Note $x={1009} $y={115} $w={180} $h={233} $body="linear-gradient(#ffffc6 50%,#fbf3a0)">
        <NoteHead $c="#f7f6b4" />
        <NoteBody><NoteText>cpanel</NoteText></NoteBody>
        <GripDots c="#a8a070" />
      </Note>
      <Note $x={819} $y={115} $w={180} $h={120} $body="#ffffc6">
        <NoteHead $c="#f7f6b4"><span>+</span><CloseX s={10} c="#8b8a5c" /></NoteHead>
        <NoteBody>
          <Caret />
          <NoteText>reynita</NoteText>
          <NoteScroll>
            <Chev c="#c8c8a0" up />
            <NoteThumb />
          </NoteScroll>
        </NoteBody>
      </Note>

      <Explorer>
        <ExTitle>
          <QuickIcons>
            <TinyFolder />
            <TinyFolder tint="#efefef" />
            <TinyFolder tint="#e3c777" />
          </QuickIcons>
          <WinButtons>
            <WinBtn $w={26}><MinGlyph /></WinBtn>
            <WinBtn $w={27}><MaxGlyph /></WinBtn>
            <WinBtn $w={45} $bg="#b5b5b5"><CloseX /></WinBtn>
          </WinButtons>
        </ExTitle>
        <ExInner>
          <Ribbon><Chev c="#888" />{HELP}</Ribbon>
          <AddressRow>
            <AddressBox>
              <AddrPart><Chev c="#555" /></AddrPart>
              <AddrPart>
                <svg width="13" height="13" viewBox="0 0 13 13"><path d="M10.500 6.500a4.500 4.500 0 1 1-2-3.700" fill="none" stroke="#777" strokeWidth="1.500" /><path d="M7 .5l3.500 2.500L7 5.500z" fill="#777" /></svg>
              </AddrPart>
            </AddressBox>
            <SearchBox>
              <span>Search dist</span>
              <svg width="13" height="13" viewBox="0 0 13 13"><circle cx="8" cy="5" r="3.500" fill="none" stroke="#666" strokeWidth="1.500" /><path d="M5.500 7.500L1.500 12" stroke="#666" strokeWidth="2" /></svg>
            </SearchBox>
          </AddressRow>
          <ExBody>
            <NavPane>
              <NavScroll><NavThumb /><Chev c="#555" /></NavScroll>
              <NavItem><Hdd kind="win" />Local Disk (C:)</NavItem>
              <NavItem><Hdd />Ubuntu (D:)</NavItem>
              <NavItem><Hdd />HP_RECOVERY (E:)</NavItem>
              <NavItem $sel><Hdd kind="dark" />KINGSTON (G:)</NavItem>
              <NavNet><NetIcon />Network</NavNet>
            </NavPane>
            <List>
              <GridRow $head>
                <HeadCell>Name</HeadCell>
                <HeadCell>Date modified</HeadCell>
                <HeadCell>Type</HeadCell>
                <HeadCell>Size</HeadCell>
              </GridRow>
              <ListRows>
                <GridRow><span /><DateCell>1/24/2017 3:07 PM</DateCell><TextCell>File folder</TextCell><span /></GridRow>
                <GridRow $sel><span /><DateCell>1/24/2017 3:28 PM</DateCell><TextCell>WinRAR archive</TextCell><TextCell $r>198 KB</TextCell></GridRow>
                <GridRow><span /><DateCell>1/24/2017 12:59 PM</DateCell><TextCell>Text Document</TextCell><TextCell $r>2 KB</TextCell></GridRow>
              </ListRows>
            </List>
          </ExBody>
          <Status>
            <StatusPart $w={48}>3 items</StatusPart>
            <StatusPart $w={141}>1 item selected  197 KB</StatusPart>
            <ViewButtons>
              <ViewBtn $on>
                <svg width="16" height="14" viewBox="0 0 16 14"><path d="M1 1h3v3H1zM1 5.500h3v3H1zM1 10h3v3H1z" fill="#fff" stroke="#777" strokeWidth=".8" /><path d="M6 2.500h9M6 7h9M6 11.500h9" stroke="#456" strokeWidth="1" strokeDasharray="2 1" /></svg>
              </ViewBtn>
              <ViewBtn>
                <svg width="14" height="12" viewBox="0 0 14 12"><rect x=".5" y=".5" width="13" height="11" fill="#fff" stroke="#8aa" /><rect x="2" y="2" width="10" height="8" fill="#38a" /><path d="M2 10l3-3 3 2 4-2v3z" fill="#264" /></svg>
              </ViewBtn>
            </ViewButtons>
          </Status>
        </ExInner>
      </Explorer>

      <Dialog>
        <DlgTitle>
          <DlgJava><JavaIcon s={16} /></DlgJava>
          <WinButtons>
            <WinBtn $w={28}><MinGlyph /></WinBtn>
            <WinBtn $w={27}><MaxGlyph /></WinBtn>
            <WinBtn $w={45} $bg="#c75050"><CloseX /></WinBtn>
          </WinButtons>
        </DlgTitle>
        <Client>
          <HeaderRow>
            <Welcome>Bienvenido</Welcome>
            <Logo />
          </HeaderRow>
          <Form>
            <FieldLabel>Usuario</FieldLabel>
            <Field><FieldCaret /></Field>
            <Submit>Ingresar</Submit>
            <FieldLabel>Contrasena</FieldLabel>
            <Field />
          </Form>
        </Client>
      </Dialog>

      <Taskbar>
        <Start>
          <svg width="26" height="26" viewBox="0 0 26 26"><path d="M0 3.500l11.500-1.700v10.400H0zM13 1.600L26 0v12.200H13zM0 13.700h11.500v10.500L0 22.600zM13 13.700h13V26l-13-1.700z" fill="#fff" /></svg>
        </Start>
        <Pinned><Ie /></Pinned>
        <TaskBtn $w={54} $ml={0}><Chrome s={30} /></TaskBtn>
        <Sliver />
        <TaskBtn $w={52}><ExplorerIcon /></TaskBtn>
        <Sliver />
        <Sliver />
        <TaskBtn><Sticky /></TaskBtn>
        <TaskBtn $w={58}><FileZ s={32} /></TaskBtn>
        <TaskBtn $w={58}><Sublime s={32} id="subt" /></TaskBtn>
        <TaskBtn $on><JavaIcon s={32} /></TaskBtn>
        <Tray>
          <TrayIcons>
            <svg width="10" height="6" viewBox="0 0 10 6"><path d="M0 6l5-6 5 6z" fill="#fff" /></svg>
            <FlagOffset><svg width="16" height="16" viewBox="0 0 16 16"><path d="M2.500 0v16" stroke="#fff" /><path d="M3 1h6l1 2h5l-2 3 2 3H9L8 7H3z" fill="#fff" /></svg></FlagOffset>
            <svg width="16" height="16" viewBox="0 0 16 16"><path d="M3 1v3M6 1v3M2 4h5v3H5.500v8h-2V7H2z" fill="#fff" stroke="#fff" strokeWidth=".7" /><rect x="9" y="1" width="6" height="14" rx="1" fill="#7a6b4c" stroke="#ddd" /><path d="M9 9l6 6M15 9l-6 6" stroke="#e02020" strokeWidth="1.800" /></svg>
            <svg width="16" height="16" viewBox="0 0 16 16"><circle cx="3" cy="3.500" r="2.500" fill="none" stroke="#fff" strokeWidth="1.200" /><path d="M3 6v5" stroke="#fff" strokeWidth="1.200" /><path d="M6 3h9v8H6M10 11v3M6 15h9" fill="none" stroke="#fff" strokeWidth="1.200" /></svg>
            <svg width="14" height="16" viewBox="0 0 14 16"><path d="M1 5h3l4-4v14l-4-4H1z" fill="#eee" stroke="#fff" /><path d="M10 5c1.500 2 1.500 4 0 6" fill="none" stroke="#fff" /></svg>
          </TrayIcons>
          <Eng>ENG</Eng>
          <Clock><span>10:16 PM</span><span>1/24/2017</span></Clock>
        </Tray>
      </Taskbar>
    </Desktop>
  );
}
